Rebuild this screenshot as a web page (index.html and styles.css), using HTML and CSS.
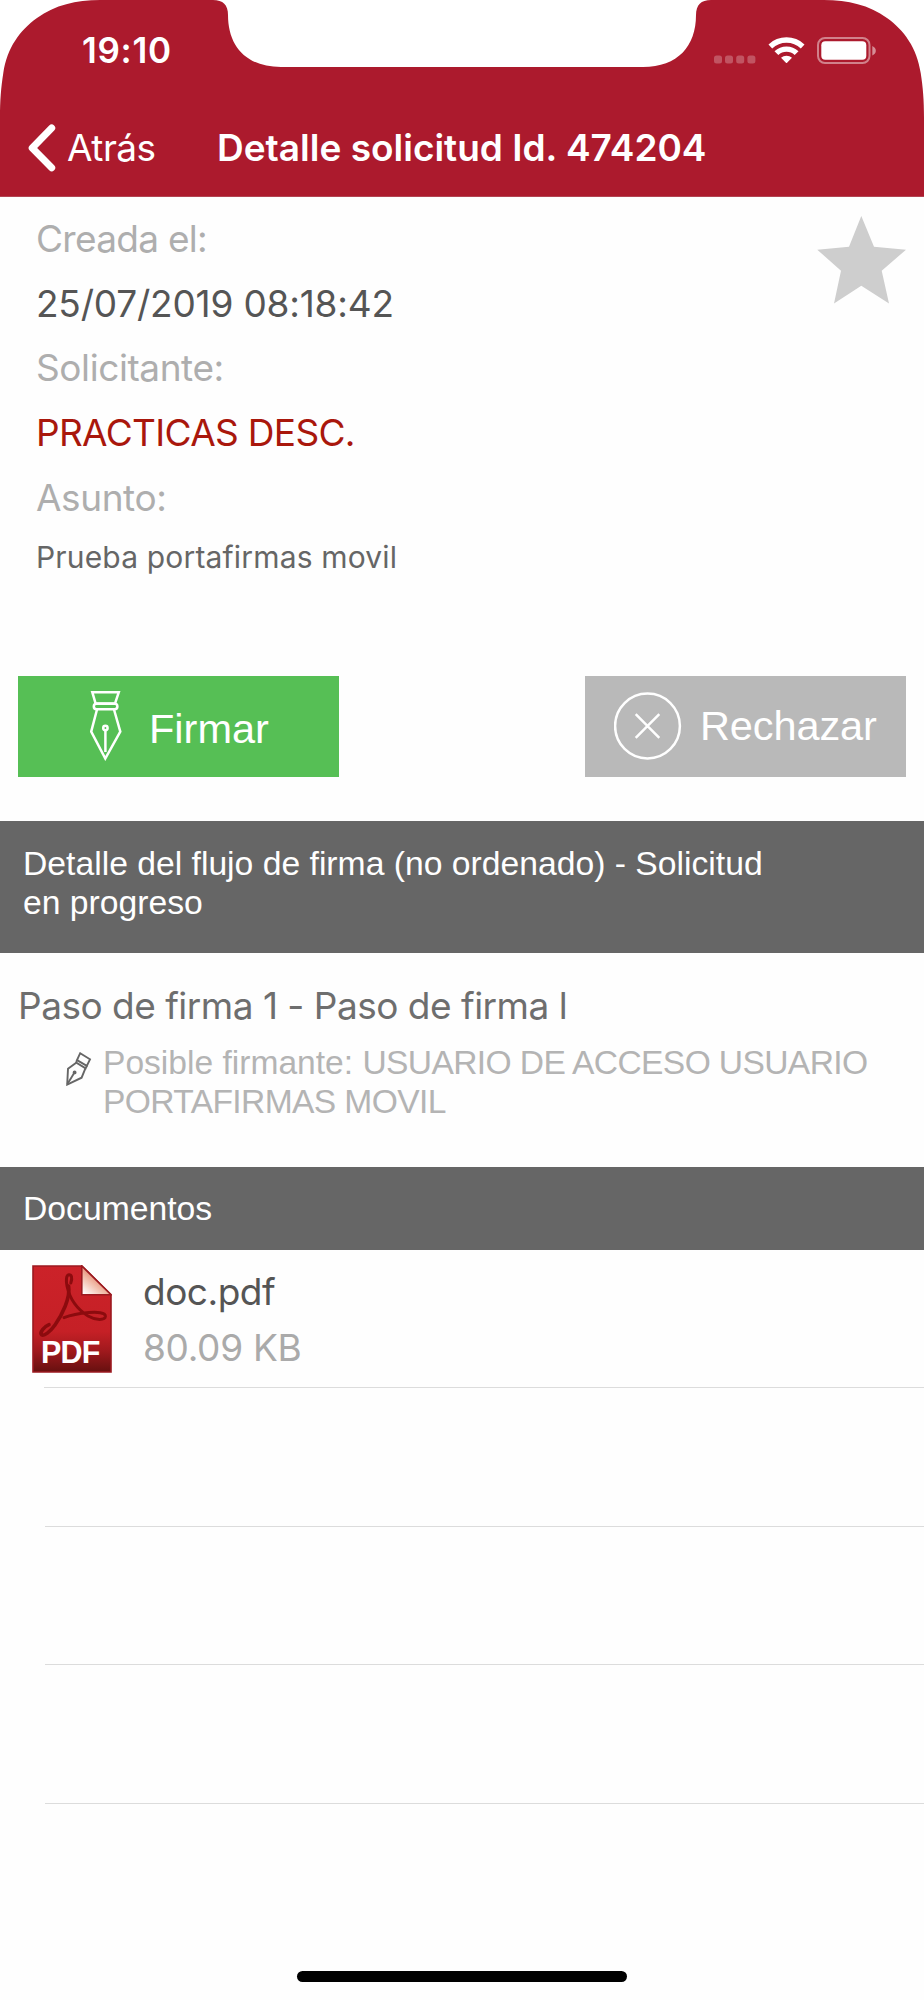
FILE: index.html
```html
<!DOCTYPE html>
<html lang="es">
<head>
    <meta charset="UTF-8">
    <meta name="viewport" content="width=device-width, initial-scale=1.0">
    <title>Detalle solicitud</title>
    <link rel="stylesheet" href="styles.css">
</head>
<body>
    <div class="screen">
        <header class="header">
            <!-- Rounded screen corners and notch -->
            <svg class="bezel" viewBox="0 0 924 120">
                <path d="M0 0H100C76 0 55 5 37 18C20 30 7 48 3.3 73C1 88 0 100 0 118Z"/>
                <path d="M924 0H824C848 0 869 5 887 18C904 30 917 48 920.7 73C923 88 924 100 924 118Z"/>
                <path d="M213 0C223 0 228 5 228 15C228 46 246 67 281 67H643C678 67 696 46 696 15C696 5 701 0 711 0Z"/>
            </svg>
            <div class="status-bar">
                <span class="time">19:10</span>
                <div class="status-icons">
                    <svg class="dots" width="42" height="26" viewBox="0 0 42 26">
                        <rect x="0" y="18.5" width="8" height="8" rx="2.5"/>
                        <rect x="11" y="18.5" width="8" height="8" rx="2.5"/>
                        <rect x="22.2" y="18.5" width="8" height="8" rx="2.5"/>
                        <rect x="33.4" y="18.5" width="8" height="8" rx="2.5"/>
                    </svg>
                    <svg class="wifi" width="37" height="26" viewBox="0 0 36 26">
                        <path d="M0 7.4A26 26 0 0 1 36 7.4L32.3 11.4A21 21 0 0 0 3.7 11.4Z"/>
                        <path d="M6 14.2A17.6 17.6 0 0 1 30 14.2L26.2 18A12.2 12.2 0 0 0 9.8 18Z"/>
                        <path d="M12.5 20.8A8.3 8.3 0 0 1 23.5 20.8L18 26.3Z"/>
                    </svg>
                    <svg class="battery" width="60" height="27" viewBox="0 0 60 27">
                        <rect class="battery-case" x="1" y="1" width="51.5" height="25" rx="7"/>
                        <rect class="battery-level" x="4.3" y="4.2" width="45" height="18.6" rx="4"/>
                        <path class="battery-tip" d="M55.3 9V18.5C60 16.5 60 11 55.3 9Z"/>
                    </svg>
                </div>
            </div>
            <nav class="nav-bar">
                <a class="back">
                    <svg width="28" height="48" viewBox="0 0 28 48">
                        <polyline points="23.7,4 4.2,24 23.7,43.7"/>
                    </svg>
                    <span>Atrás</span>
                </a>
                <h1>Detalle solicitud Id. 474204</h1>
            </nav>
        </header>

        <!-- Request info -->
        <section class="info">
            <div class="fields">
                <div class="label creada">Creada el:</div>
                <div class="value fecha">25/07/2019 08:18:42</div>
                <div class="label">Solicitante:</div>
                <div class="value sender">PRACTICAS DESC.</div>
                <div class="label">Asunto:</div>
                <div class="subject">Prueba portafirmas movil</div>
            </div>
            <svg class="star" width="89" height="88" viewBox="0 0 89 88">
                <polygon points="44.3,0 57,30.7 89,33.7 64.7,54.7 72,87.5 44.3,69.7 17,87.5 24,54.7 0.3,33.7 32,30.7"/>
            </svg>
        </section>

        <!-- Action buttons -->
        <div class="actions">
            <button class="btn btn-sign">
                <svg width="32" height="70" viewBox="0 0 32 70">
                    <path d="M2.3 1.2H28.8L25 12.6H5.6Z"/>
                    <rect x="3.8" y="12.8" width="23.6" height="5.4" rx="2.7"/>
                    <path d="M7 18.5L1.2 40.7L15.3 67.5L30.3 40.7L24 18.5"/>
                    <circle cx="15.4" cy="37" r="2.2"/>
                    <path d="M15.4 39.4V61"/>
                </svg>
                <span>Firmar</span>
            </button>
            <button class="btn btn-reject">
                <svg width="68" height="68" viewBox="0 0 68 68">
                    <circle cx="33.5" cy="34" r="32.4"/>
                    <path d="M21.7 22.2L45.3 45.8M45.3 22.2L21.7 45.8"/>
                </svg>
                <span>Rechazar</span>
            </button>
        </div>

        <!-- Signature flow -->
        <div class="section-title flow-title">Detalle del flujo de firma (no ordenado) - Solicitud<br>en progreso</div>
        <section class="step">
            <h2>Paso de firma 1 - Paso de firma l</h2>
            <div class="signer">
                <svg width="26" height="34" viewBox="0 0 26 34">
                    <path d="M14.2 1.2L24 7.3L20.8 13.8L11 8Z"/>
                    <path d="M11 8L10.2 10.6L19.6 16.4L20.8 13.8"/>
                    <path d="M10.2 10.8L2 16.8L1.2 32.6L15.6 25.7L19.4 16.4"/>
                    <path d="M1.4 32L8.2 21"/>
                    <circle cx="8.6" cy="20.4" r="1"/>
                </svg>
                <p>Posible firmante: <span class="signer-name">USUARIO DE ACCESO USUARIO<br>PORTAFIRMAS MOVIL</span></p>
            </div>
        </section>

        <!-- Documents -->
        <div class="section-title docs-title">Documentos</div>
        <ul class="docs">
            <li class="doc">
                <svg class="pdf-icon" width="80" height="108" viewBox="0 0 80 108">
                    <defs>
                        <linearGradient id="pdf-body" x1="0" y1="0" x2="0" y2="1">
                            <stop offset="0" stop-color="#cc2229"/>
                            <stop offset="0.62" stop-color="#c52026"/>
                            <stop offset="0.8" stop-color="#a0191d"/>
                            <stop offset="1" stop-color="#66100f"/>
                        </linearGradient>
                        <linearGradient id="pdf-fold" x1="0.75" y1="0.2" x2="0.1" y2="1">
                            <stop offset="0" stop-color="#d9583f"/>
                            <stop offset="0.5" stop-color="#f0b6a2"/>
                            <stop offset="1" stop-color="#ffffff"/>
                        </linearGradient>
                    </defs>
                    <path d="M1 1H50L79 29.5V107H1Z" fill="url(#pdf-body)" stroke="#9c1a20" stroke-width="1.6"/>
                    <path d="M49.8 1L79 29.8H49.8Z" fill="url(#pdf-fold)" stroke="#9c1a20" stroke-width="1.6"/>
                    <g fill="none" stroke="#8c0b0e" stroke-linecap="round">
                        <path d="M38.8 18C40.6 13 39.6 9.6 36.8 9.8C34 10 34 16 35 21C37.5 33 45 44 56 51C64 55.6 73 55.4 73.4 51.4C73.6 47.4 65 47 57 47.6C48 48.4 39 50 32 52.6" stroke-width="3"/>
                        <path d="M36.6 21C38.6 33 30 50 23 60C18 67 12 71.4 9.6 69.8C7.4 67.4 12 61.6 17 59.6" stroke-width="3.6"/>
                    </g>
                    <text x="9" y="97.8">PDF</text>
                </svg>
                <div class="doc-text">
                    <div class="doc-name">doc.pdf</div>
                    <div class="doc-size">80.09 KB</div>
                </div>
            </li>
            <li></li>
            <li></li>
            <li></li>
        </ul>

        <div class="home-indicator"></div>
    </div>
</body>
</html>
```
FILE: styles.css
```css
/* General Styles */
* {
    box-sizing: border-box;
}

body {
    font-family: Inter, "Liberation Sans", sans-serif;
    font-size: 37px;
    background-color: #fefefe;
    color: #555;
    margin: 0;
}

h1, h2, p, ul {
    margin: 0;
    padding: 0;
}

svg {
    display: block;
    flex: none;
}

.screen {
    width: 924px;
    height: 2000px;
    display: flex;
    flex-direction: column;
    overflow: hidden;
    white-space: nowrap;
}

/* Header */
.header {
    position: relative;
    flex: none;
    height: 197px;
    background: #ac1a2d;
    border-bottom: 1px solid #b24452;
    color: #fff;
}

.bezel {
    position: absolute;
    top: 0;
    left: 0;
    width: 924px;
    height: 120px;
    fill: #fff;
}

.status-bar {
    display: flex;
    justify-content: space-between;
    height: 99px;
    padding: 0 47px 0 82px;
}

.time {
    font-size: 35px;
    font-weight: 600;
    line-height: 101px;
    letter-spacing: 0.7px;
}

.status-icons {
    display: flex;
    align-items: flex-start;
    gap: 12.2px;
    padding-top: 37px;
    fill: #fff;
}

.dots {
    opacity: 0.25;
    overflow: visible;
}

.battery-case {
    fill: none;
    stroke: #fff;
    stroke-width: 2;
    opacity: 0.45;
}

.battery-tip {
    opacity: 0.5;
}

.nav-bar {
    display: flex;
    align-items: center;
    height: 97px;
    padding-left: 28px;
}

.back {
    display: flex;
    align-items: center;
    gap: 11px;
    width: 189px;
    letter-spacing: -0.5px;
}

.back polyline {
    fill: none;
    stroke: #fff;
    stroke-width: 7;
    stroke-linecap: round;
    stroke-linejoin: round;
}

.nav-bar h1 {
    font-size: 37px;
    font-weight: 600;
}

/* Request info */
.info {
    display: flex;
    justify-content: space-between;
    height: 479px;
    padding: 10px 18px 0 36px;
    line-height: 64.7px;
}

.label {
    color: #aeaeae;
    letter-spacing: -0.42px;
}

.creada {
    letter-spacing: -0.7px;
}

.fecha {
    letter-spacing: -0.2px;
}

.sender {
    color: #a9170c;
    letter-spacing: -0.67px;
}

.subject {
    font-size: 30px;
    line-height: 53px;
    letter-spacing: 0.17px;
    color: #666;
}

.star {
    margin-top: 9px;
    fill: #cecece;
}

/* Buttons */
.actions {
    display: flex;
    justify-content: space-between;
    height: 145px;
    padding: 0 18px;
}

.btn {
    display: flex;
    align-items: center;
    width: 321px;
    height: 101px;
    border: none;
    color: #fff;
    font-family: "Liberation Sans", sans-serif;
    font-size: 41.5px;
}

.btn svg {
    margin-bottom: 2px;
    fill: none;
    stroke: #fff;
    stroke-width: 2.5;
}

.btn-sign {
    gap: 27px;
    padding: 0 0 0 72px;
    background: #56bf55;
}

.btn-sign span {
    padding-top: 4px;
}

.btn-reject {
    gap: 18.5px;
    padding: 0 0 0 28.5px;
    background: #b9b9b9;
}

.btn-reject span {
    padding-bottom: 1px;
    letter-spacing: -0.1px;
}

/* Section headings */
.section-title {
    flex: none;
    padding-left: 23px;
    background: #666;
    color: #fff;
    font-family: "Liberation Sans", sans-serif;
    font-size: 33.7px;
}

.flow-title {
    height: 132px;
    padding-top: 23px;
    line-height: 38.6px;
}

.docs-title {
    height: 83px;
    line-height: 83px;
}

/* Signature step */
.step {
    height: 214px;
    padding: 26.5px 0 0 18px;
}

.step h2 {
    font-size: 37px;
    font-weight: 400;
    line-height: 51px;
    letter-spacing: -0.5px;
    color: #6e6e6e;
}

.signer {
    display: flex;
    gap: 11px;
    padding: 13.5px 0 0 48px;
    color: #b4b4b4;
    font-family: "Liberation Sans", sans-serif;
    font-size: 33.6px;
    line-height: 38.6px;
}

.signer-name {
    letter-spacing: -0.62px;
}

.signer svg {
    margin-top: 8px;
    fill: none;
    stroke: #666;
    stroke-width: 1.9;
}

/* Documents */
.docs {
    list-style: none;
}

.docs li {
    height: 138.4px;
    margin-left: 45px;
    border-bottom: 1.5px solid #dcdcdc;
}

.docs .doc {
    display: flex;
    gap: 31px;
    margin-left: 0;
    padding: 15px 0 0 32px;
    border-image: linear-gradient(to right, transparent 45px, #dcdcdc 45px) 1;
}

.pdf-icon text {
    fill: #fff;
    font-family: "Liberation Sans", sans-serif;
    font-size: 30.5px;
    font-weight: 700;
    letter-spacing: -0.8px;
}

.doc-text {
    margin-top: -1px;
    line-height: 55.7px;
}

.doc-name {
    color: #555;
    letter-spacing: -0.5px;
}

.doc-size {
    color: #aaa;
    letter-spacing: -0.3px;
}

.home-indicator {
    width: 330px;
    height: 11px;
    margin: auto auto 18px;
    border-radius: 6px;
    background: #000;
}
```
